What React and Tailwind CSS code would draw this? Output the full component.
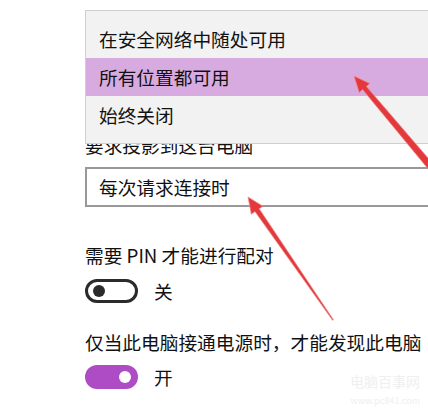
const font = { fontFamily: '"Noto Sans CJK SC", "Noto Sans", sans-serif' };

function Toggle({ on }) {
  return on ? (
    <div className="flex h-[24px] w-[53px] items-center justify-end rounded-full bg-[#ad4cc5] pr-[7px]">
      <div className="h-[12px] w-[12px] rounded-full bg-white" />
    </div>
  ) : (
    <div className="flex h-[24px] w-[53px] items-center rounded-full border-[3px] border-[#2b2b2b] bg-white pl-[5px]">
      <div className="h-[12px] w-[12px] rounded-full bg-[#2b2b2b]" />
    </div>
  );
}

function Arrows() {
  return (
    <svg className="absolute left-0 top-0" width="428" height="412" viewBox="0 0 428 412">
      {/* upper arrow, into the highlighted item */}
      <polygon
        points="354,76 369.8,83.4 366.4,86.4 440,172 434,176 362.6,89.6 359.2,92.6"
        fill="#e3393c"
        stroke="#f08a8c"
        strokeWidth="0.8"
      />
      {/* lower arrow, into the input box */}
      <polygon
        points="248,197 262.9,206.2 259.2,208.8 333.4,319.7 332.6,320.3 255,211.6 251.3,214.2"
        fill="#e3393c"
        stroke="#f08a8c"
        strokeWidth="0.8"
      />
    </svg>
  );
}

export default function App() {
  return (
    <div className="relative h-[412px] w-[428px] overflow-hidden bg-white text-[#111]" style={font}>
      <div className="flex flex-col pl-[85px] pt-[133px] text-[18.7px]">
        <div className="h-[24px] leading-[24px]">要求投影到这台电脑</div>
        <div className="mt-[10px] flex h-[40px] w-[360px] items-center border-2 border-[#999] bg-white pl-[12px]">
          每次请求连接时
        </div>
        <div className="mt-[36px] h-[24px] leading-[24px]">需要 PIN 才能进行配对</div>
        <div className="mt-[12px] flex items-center gap-[16px]">
          <Toggle on={false} />
          <span className="leading-[24px]">关</span>
        </div>
        <div className="mt-[27px] h-[24px] whitespace-nowrap leading-[24px]">
          仅当此电脑接通电源时，才能发现此电脑
        </div>
        <div className="mt-[11px] flex items-center gap-[16px]">
          <Toggle on />
          <span className="leading-[24px]">开</span>
        </div>
      </div>

      {/* open dropdown menu */}
      <div className="absolute left-[85px] top-[10px] w-[360px] border border-[#cfcfcf] bg-[#f2f2f2] py-[9px] text-[18.7px]">
        <div className="flex h-[38px] items-center pl-[13px]">在安全网络中随处可用</div>
        <div className="flex h-[38px] items-center bg-[#d8abe0] pl-[13px]">所有位置都可用</div>
        <div className="flex h-[38px] items-center pl-[13px]">始终关闭</div>
      </div>

      {/* watermark */}
      <div className="absolute right-[8px] top-[374px] flex flex-col items-end leading-none text-[#efefef]">
        <span className="text-[14px] leading-[14px]">电脑百事网</span>
        <span className="mt-[8px] text-[9px] leading-[9px]">www.pc841.com</span>
      </div>

      <Arrows />
    </div>
  );
}
